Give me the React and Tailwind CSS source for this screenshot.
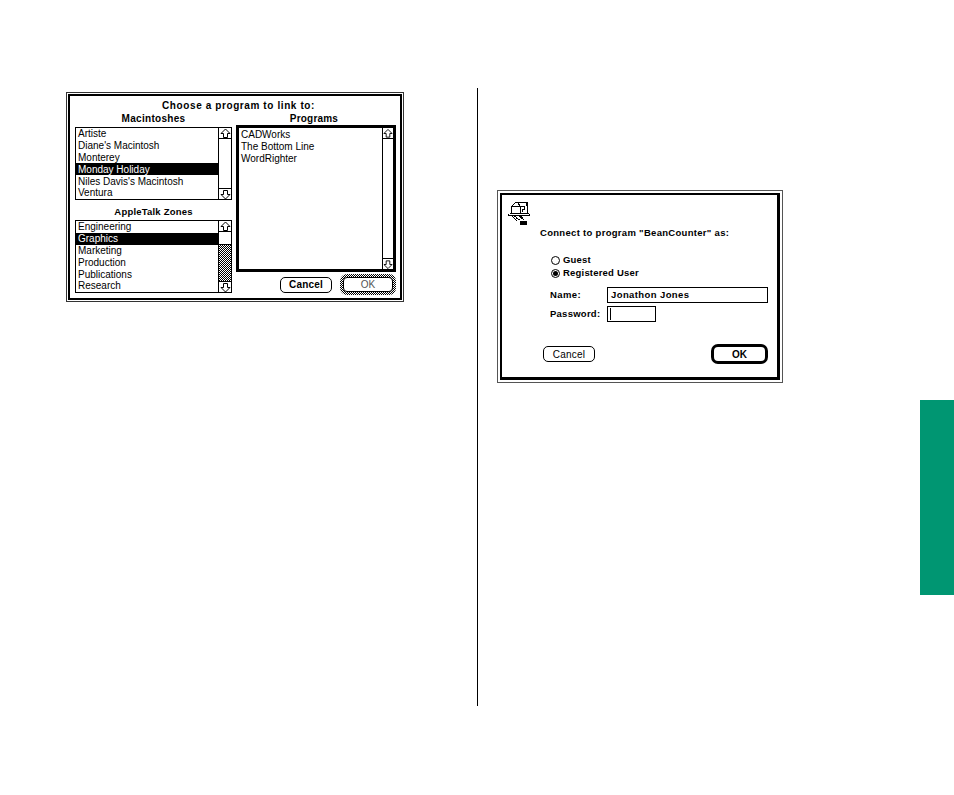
const font = "font-['Liberation_Sans',_'DejaVu_Sans',_sans-serif]";

function Arrow({ down }) {
  return (
    <svg width="11" height="11" viewBox="0 0 11 11" className={down ? "rotate-180" : ""}>
      <path d="M5.5 1 L10 5.5 H7.5 V9.5 H3.5 V5.5 H1 Z" fill="#fff" stroke="#000" strokeWidth="1" />
    </svg>
  );
}

function Scrollbar({ zones, width = "w-[13px]" }) {
  return (
    <div className={`${width} shrink-0 border-l border-black flex flex-col`}>
      <div className="h-[11px] flex items-center justify-center border-b border-black shrink-0">
        <Arrow />
      </div>
      {zones ? (
        <>
          <div className="h-[13px] border-b border-black shrink-0 bg-white" />
          <div className="flex-1 bg-[repeating-conic-gradient(#000_0_25%,#fff_0_50%)] bg-[length:2px_2px]" />
        </>
      ) : (
        <div className="flex-1" />
      )}
      <div className="h-[11px] flex items-center justify-center border-t border-black shrink-0">
        <Arrow down />
      </div>
    </div>
  );
}

function ListBox({ items, selected, heightClass, rowClass, zones }) {
  return (
    <div className={`${heightClass} border border-black flex overflow-hidden`}>
      <div className="flex-1 flex flex-col min-w-0">
        {items.map((t) => (
          <div
            key={t}
            className={`${rowClass} pl-[2px] flex items-center text-[10px] whitespace-nowrap ${t === selected ? "bg-black text-white" : "text-black"}`}
          >
            {t}
          </div>
        ))}
      </div>
      <Scrollbar zones={zones} />
    </div>
  );
}

function Btn({ children, className = "" }) {
  return (
    <div className={`w-[52px] h-[16px] border border-black rounded-[5px] bg-white flex items-center justify-center text-[10px] tracking-[0.2px] ${className}`}>
      {children}
    </div>
  );
}

function MailIcon() {
  return (
    <svg width="24" height="26" viewBox="0 0 24 26" fill="none" stroke="#000" strokeWidth="1" shapeRendering="crispEdges" className="-ml-[2px]">
      <path d="M2.5 13.5 H21.5 M1.5 15.5 H22.5 M1.5 13.5 V15.5 M22.5 13.5 V15.5" />
      <path d="M4.5 13 V6.5 H13.5 V13 M13.5 6.5 L10.5 2.5 H8.5 L4.5 6.5" />
      <path d="M10.5 2.5 H20.5 V13 M13.5 6.5 H17.5 V9.5 H15.5 V11.5 M19 5.5 L20.5 2.5" />
      <path d="M7.5 16 L12.5 20 M5.5 16.5 L10.5 21.5 M12 16 L16 19 M9.5 18.5 L8 20 M14.5 16 L16.5 20" />
      <rect x="13" y="21" width="7" height="4" fill="#000" stroke="none" />
    </svg>
  );
}

function Radio({ on }) {
  return (
    <div className="w-[9px] h-[9px] rounded-full border border-black flex items-center justify-center bg-white shrink-0">
      {on && <div className="w-[5px] h-[5px] rounded-full bg-black" />}
    </div>
  );
}

export default function App() {
  return (
    <div className={`${font} relative w-[954px] h-[795px] bg-white overflow-hidden flex items-start text-black`}>
      {/* left half */}
      <div className="w-[477px] pl-[66px] pt-[92px] shrink-0">
        <div className="w-[338px] h-[210px] border border-[#333] p-[1px]">
          <div className="h-full border-2 border-black pl-[5px] pr-[4px] pt-[3px]">
            <div className="h-[13px] pl-[6px] flex items-center justify-center font-bold text-[10px] tracking-[0.6px]">
              Choose a program to link to:
            </div>
            <div className="grid grid-cols-[157px_160px] gap-x-[4px]">
              <div>
                <div className="h-[13px] flex items-center justify-center font-bold text-[10px] tracking-[0.3px]">Macintoshes</div>
                <div className="mt-[2px]">
                  <ListBox
                    heightClass="h-[73px]"
                    rowClass="h-[11.8px]"
                    selected="Monday Holiday"
                    items={["Artiste", "Diane's Macintosh", "Monterey", "Monday Holiday", "Niles Davis's Macintosh", "Ventura"]}
                  />
                </div>
                <div className="mt-[6px] h-[12px] flex items-center justify-center font-bold text-[9.5px] tracking-[0.2px]">AppleTalk Zones</div>
                <div className="mt-[2px]">
                  <ListBox
                    zones
                    heightClass="h-[73px]"
                    rowClass="h-[11.8px]"
                    selected="Graphics"
                    items={["Engineering", "Graphics", "Marketing", "Production", "Publications", "Research"]}
                  />
                </div>
              </div>
              <div>
                <div className="h-[13px] pr-[4px] flex items-center justify-center font-bold text-[10px] tracking-[0.2px]">Programs</div>
                <div className="h-[147px] border-[3px] border-black flex">
                  <div className="flex-1 pl-[2px]">
                    {["CADWorks", "The Bottom Line", "WordRighter"].map((t) => (
                      <div key={t} className="h-[12.3px] flex items-center text-[10px] whitespace-nowrap">{t}</div>
                    ))}
                  </div>
                  <Scrollbar width="w-[11px]" />
                </div>
                <div className="mt-[2px] h-[21px] flex items-center justify-end gap-[8px]">
                  <Btn className="font-bold">Cancel</Btn>
                  <div className="w-[56px] h-[21px] rounded-[7px] p-[3px] bg-[repeating-conic-gradient(#000_0_25%,#fff_0_50%)] bg-[length:2px_2px]">
                    <div className="h-full rounded-[4px] border border-black bg-white flex items-center justify-center text-[10px] text-[#555]">OK</div>
                  </div>
                </div>
              </div>
            </div>
          </div>
        </div>
      </div>

      {/* divider */}
      <div className="w-px h-[618px] mt-[88px] bg-black shrink-0" />

      {/* right half */}
      <div className="pl-[19px] pt-[190px] shrink-0">
        <div className="w-[286px] h-[193px] border border-[#555] p-[2px]">
          <div className="h-full border-[2px] border-r-[3px] border-b-[3px] border-black pl-[7px] pt-[5px]">
            <MailIcon />
            <div className="mt-[1px] pl-[31px] font-bold text-[9.5px] tracking-[0.3px] h-[12px] flex items-center whitespace-nowrap">
              Connect to program "BeanCounter" as:
            </div>
            <div className="pl-[42px] mt-[15px] flex flex-col">
              <div className="h-[13px] flex items-center gap-[3px] font-bold text-[9.5px] tracking-[0.2px]"><Radio />Guest</div>
              <div className="h-[13px] flex items-center gap-[3px] font-bold text-[9.5px] tracking-[0.2px]"><Radio on />Registered User</div>
            </div>
            <div className="pl-[41px] mt-[7px] flex items-center h-[16px]">
              <div className="w-[57px] font-bold text-[9.5px] tracking-[0.4px]">Name:</div>
              <div className="w-[161px] h-[16px] border border-black pl-[3px] flex items-center font-bold text-[9.5px] tracking-[0.4px] whitespace-nowrap">Jonathon Jones</div>
            </div>
            <div className="pl-[41px] mt-[3px] flex items-center h-[16px]">
              <div className="w-[57px] font-bold text-[9.5px] tracking-[0.25px]">Password:</div>
              <div className="w-[49px] h-[16px] border border-black pl-[2px] flex items-center">
                <div className="w-px h-[12px] bg-black" />
              </div>
            </div>
            <div className="pl-[34px] pr-[9px] mt-[22px] flex items-center justify-between h-[20px]">
              <Btn>Cancel</Btn>
              <div className="w-[57px] h-[20px] border-[3px] border-black rounded-[7px] flex items-center justify-center font-bold text-[10px]">OK</div>
            </div>
          </div>
        </div>
      </div>

      {/* green tab */}
      <div className="absolute left-[920px] top-[400px] w-[34px] h-[195px] bg-[#009672]" />
    </div>
  );
}
